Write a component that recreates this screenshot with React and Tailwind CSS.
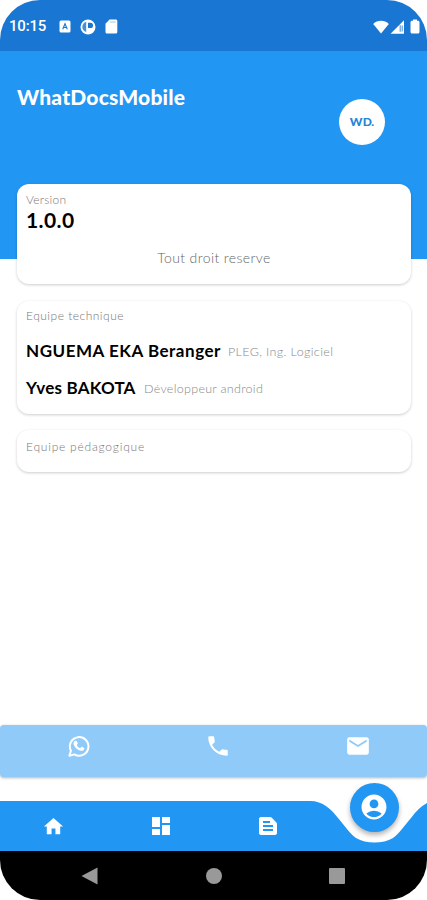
import {
  MdAccountCircle,
  MdDashboard,
  MdEmail,
  MdHome,
  MdPhone,
  MdTextSnippet,
} from 'react-icons/md';

function StatusBar() {
  return (
    <div className="h-[51px] shrink-0 bg-[#1976d2] flex items-center pl-[9px] pr-[7px] pt-[2px] text-white">
      <span className="w-[38px] font-[Roboto] text-[15px] font-medium leading-none tracking-[-0.2px]">10:15</span>

      <svg className="ml-[12px] w-[12px] h-[13px]" viewBox="0 0 12 13">
        <rect x="0.5" y="0.5" width="11" height="12" rx="1.5" fill="#fff" />
        <path d="M3.7 9.3 6 3.8 8.3 9.3M4.6 7.5h2.8" fill="none" stroke="#1976d2" strokeWidth="1.1" />
      </svg>
      <svg className="ml-[9px] w-[16px] h-[16px]" viewBox="0 0 16 16">
        <circle cx="8" cy="8" r="7.5" fill="#fff" />
        <path d="M6.2 2.8V13C3.8 12.300 2.300 10.300 2.300 8S3.800 3.600 6.200 2.800z" fill="#1976d2" opacity=".8" />
        <path d="M8 3.800h2.400a2.600 2.600 0 0 1 0 5.200H8z" fill="#1976d2" />
      </svg>
      <svg className="ml-[9px] w-[13px] h-[15px]" viewBox="0 0 13 15">
        <path d="M4.600.5h6.200c.8 0 1.500.7 1.500 1.500v11c0 .8-.7 1.500-1.500 1.500h-9C1 14.500.5 13.800.5 13V4.800z" fill="#fff" />
        <path d="M4.700 3h6" stroke="#8dbbea" strokeWidth="0.800" />
      </svg>

      <div className="ml-auto flex items-center">
        <svg className="w-[16px] h-[14px]" viewBox="0 0 16 14">
          <path d="M8 13.500.2 3.900C2.300 2 5 .8 8 .8s5.700 1.200 7.800 3.100z" fill="#fff" />
        </svg>
        <svg className="ml-[1px] w-[15px] h-[14px]" viewBox="0 0 15 14">
          <path d="M14 .3V13.700H.6z" fill="#fff" />
          <path d="M10.200 5.300v6.500M12.200 5.500v6" stroke="#1976d2" strokeWidth="1.100" opacity=".75" />
        </svg>
        <svg className="ml-[5px] w-[10px] h-[15px]" viewBox="0 0 10 15">
          <path d="M3 .5h4v1.200h1c.8 0 1.500.7 1.500 1.500v9.800c0 .8-.7 1.500-1.500 1.500H2c-.8 0-1.500-.7-1.500-1.500V3.200c0-.8.7-1.500 1.500-1.500h1z" fill="#fff" />
        </svg>
      </div>
    </div>
  );
}

function Header() {
  return (
    <header className="h-[208px] shrink-0 bg-[#2196f3] flex items-start justify-between pl-[17px] pr-[42px]">
      <h1 className="mt-[33px] text-[21px] leading-[26px] font-black text-white tracking-[0.2px] whitespace-nowrap">
        WhatDocsMobile
      </h1>
      <div className="mt-[48px] size-[46px] rounded-full bg-white flex items-center justify-center text-[12px] font-black text-[#2584d6]">
        <span className="tracking-[0.3px]">WD</span>
        <span className="-ml-[1px]">.</span>
      </div>
    </header>
  );
}

const TEAM = [
  { name: 'NGUEMA EKA Beranger', role: 'PLEG, Ing. Logiciel', nameStyle: 'w-[202px] tracking-[0.53px]', roleStyle: 'tracking-[0.36px]' },
  { name: 'Yves BAKOTA', role: 'Développeur android', nameStyle: 'w-[118px] tracking-[0.2px]', roleStyle: 'tracking-[0.3px]' },
];

const CARD = 'bg-white rounded-[12px] px-[9px] shadow-[0_1px_3px_rgba(0,0,0,0.2)]';
const LABEL = 'text-[12px] leading-[16px] font-light text-[#777] whitespace-nowrap';

function Cards() {
  return (
    <main className="-mt-[75px] flex-1 pl-[17px] pr-[16px] flex flex-col">
      <section className={`${CARD} h-[100px] pt-[8px]`}>
        <p className={`${LABEL} tracking-[0.25px]`}>Version</p>
        <p className="text-[21px] leading-[24px] font-bold text-black tracking-[0.4px]">1.0.0</p>
        <p className="mt-[17px] text-center text-[14px] leading-[18px] font-light text-[#666] tracking-[0.4px]">
          Tout droit reserve
        </p>
      </section>

      <section className={`${CARD} mt-[17px] h-[113px] pt-[7px]`}>
        <p className={`${LABEL} tracking-[0.5px]`}>Equipe technique</p>
        <div className="mt-[9px]">
          {TEAM.map(({ name, role, nameStyle, roleStyle }) => (
            <div key={name} className="h-[37px] flex items-center whitespace-nowrap">
              <span className={`${nameStyle} -mt-[1px] text-[17px] font-bold text-black`}>{name}</span>
              <span className={`${roleStyle} pt-[2px] text-[12.5px] font-light text-[#888]`}>{role}</span>
            </div>
          ))}
        </div>
      </section>

      <section className={`${CARD} mt-[16px] h-[42px] pt-[9px]`}>
        <p className={`${LABEL} tracking-[0.78px]`}>Equipe pédagogique</p>
      </section>
    </main>
  );
}

function WhatsappIcon({ className }) {
  return (
    <svg className={className} viewBox="0 0 26 26" fill="none">
      <path
        d="M3.400 22.800 4.900 17.700A9.300 9.300 0 1 1 8.400 21.400Z"
        stroke="currentColor"
        strokeWidth="2"
        strokeLinejoin="round"
      />
      <path
        d="M9.200 7.800h1.100c.3 0 .5.200.6.500l.8 2c.1.300 0 .5-.2.700l-.8.900c.8 1.500 1.900 2.500 3.500 3.300l1-1.200c.2-.2.4-.3.700-.2l2 1c.3.100.4.300.4.600-.1 1.600-1.500 2.500-3 2.400-3.800-.6-6.700-3.300-7.700-6.700-.3-1.500.4-2.900 1.600-3.300z"
        fill="currentColor"
      />
    </svg>
  );
}

function ContactBar() {
  return (
    <div className="h-[52px] shrink-0 rounded-[4px] bg-[#90caf9] shadow-[0_1px_3px_rgba(0,0,0,0.3)] grid grid-cols-[157px_122px_1fr] pt-[8px] text-white">
      <WhatsappIcon className="size-[26px] justify-self-center" />
      <MdPhone className="size-[26px] justify-self-center" />
      <MdEmail className="size-[26px] ml-[66px]" />
    </div>
  );
}

function BottomNav() {
  return (
    <nav className="relative mt-[24px] h-[50px] shrink-0 text-white">
      {/* bar with the dip under the active tab */}
      <svg className="absolute inset-0 w-full h-full" viewBox="0 0 427 50">
        <path
          d="M0 0H310C323 0 331 8 338 17C345 25 350 33 356 37Q364 41.500 374.500 41.500Q385 41.500 393 37C399 33 404 25 411 17Q418 7 427 2V50H0Z"
          fill="#2196f3"
        />
      </svg>
      <div className="relative h-full grid grid-cols-[107px_107px_107px_106px] items-center justify-items-center">
        <MdHome className="size-[23px]" />
        <MdDashboard className="size-[24px]" />
        <MdTextSnippet className="size-[24px]" />
        <div className="size-[49px] -mt-[38px] rounded-full bg-[#2196f3] shadow-[0_3px_5px_rgba(0,0,0,0.3)] flex items-center justify-center">
          <MdAccountCircle className="size-[30px]" />
        </div>
      </div>
    </nav>
  );
}

function SystemNav() {
  return (
    <div className="h-[49px] shrink-0 bg-black flex items-center justify-between pl-[81px] pr-[82px]">
      <svg className="w-[17px] h-[18px]" viewBox="0 0 17 18">
        <path d="M0.500 9 16.500 0.500V17.500Z" fill="#999" />
      </svg>
      <div className="size-[16px] rounded-full bg-[#999]" />
      <div className="size-[16px] rounded-[1px] bg-[#999]" />
    </div>
  );
}

export default function App() {
  return (
    <div className="w-[427px] h-[900px] bg-white">
      <div className="h-full rounded-[40px] overflow-hidden flex flex-col bg-white font-[Lato,sans-serif]">
        <StatusBar />
        <Header />
        <Cards />
        <ContactBar />
        <BottomNav />
        <SystemNav />
      </div>
    </div>
  );
}
